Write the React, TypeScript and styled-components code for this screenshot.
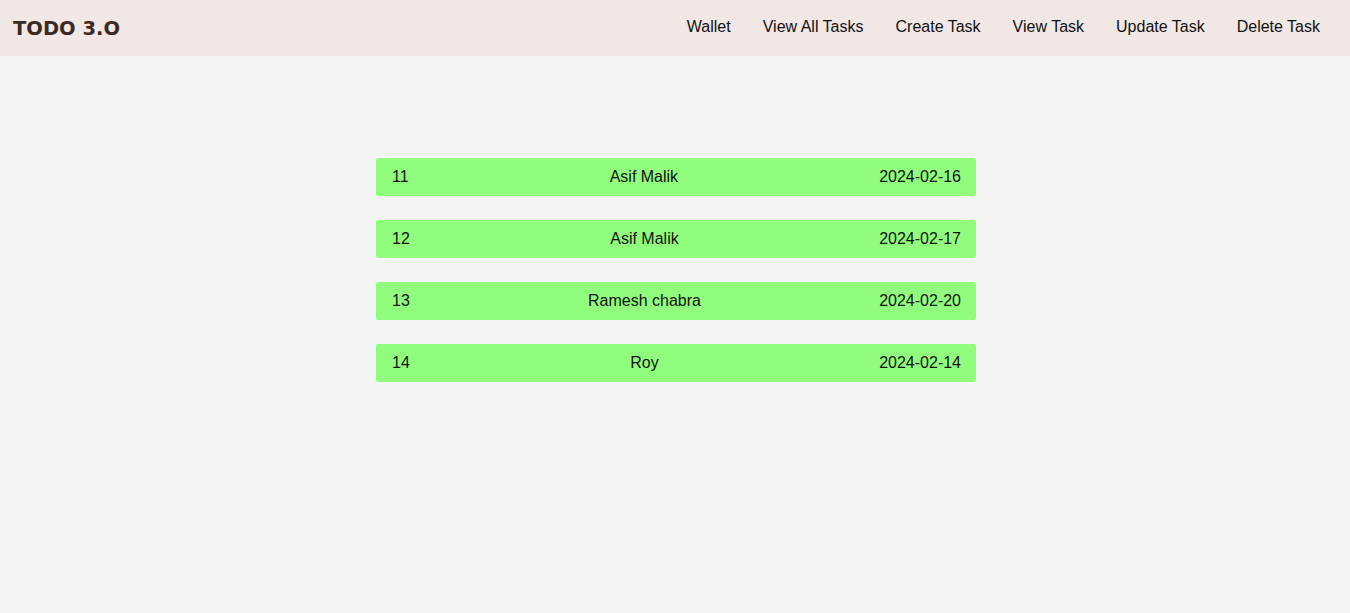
import React from "react";
import styled, { createGlobalStyle } from "styled-components";

const GlobalStyle = createGlobalStyle`
  html, body {
    margin: 0;
    padding: 0;
    background: #f4f4f4;
    font-family: "Liberation Sans", Arial, sans-serif;
  }
  * { box-sizing: border-box; }
`;

const Page = styled.div`
  min-height: 613px;
  background: #f4f4f4;
`;

const NavBar = styled.nav`
  height: 56px;
  background: #f1e8e6;
  display: flex;
  align-items: center;
  justify-content: space-between;
  padding: 0 30px 0 13px;
`;

const Logo = styled.div`
  font-family: "DejaVu Sans", Verdana, sans-serif;
  font-weight: bold;
  font-size: 19.5px;
  color: #3b2a23;
  padding-top: 1px;
`;

const Links = styled.ul`
  display: flex;
  gap: 32px;
  list-style: none;
  margin: 0;
  padding: 0 0 3px 0;
`;

const LinkItem = styled.li`
  font-size: 16px;
  color: #111;
  cursor: pointer;
`;

const List = styled.div`
  display: flex;
  flex-direction: column;
  align-items: center;
  gap: 24px;
  padding: 102px 0 0 2px;
`;

const Row = styled.div`
  width: 600px;
  height: 38px;
  background: #90fe7c;
  border-radius: 2px;
  display: flex;
  align-items: center;
  justify-content: space-between;
  padding: 0 15px 0 16px;
  font-size: 16px;
  color: #111;
`;

const tasks = [
  { id: 11, name: "Asif Malik", date: "2024-02-16" },
  { id: 12, name: "Asif Malik", date: "2024-02-17" },
  { id: 13, name: "Ramesh chabra", date: "2024-02-20" },
  { id: 14, name: "Roy", date: "2024-02-14" },
];

const links = ["Wallet", "View All Tasks", "Create Task", "View Task", "Update Task", "Delete Task"];

export default function App() {
  return (
    <Page>
      <GlobalStyle />
      <NavBar>
        <Logo>TODO 3.O</Logo>
        <Links>
          {links.map((l) => (
            <LinkItem key={l}>{l}</LinkItem>
          ))}
        </Links>
      </NavBar>
      <List>
        {tasks.map((t) => (
          <Row key={t.id}>
            <span>{t.id}</span>
            <span>{t.name}</span>
            <span>{t.date}</span>
          </Row>
        ))}
      </List>
    </Page>
  );
}
